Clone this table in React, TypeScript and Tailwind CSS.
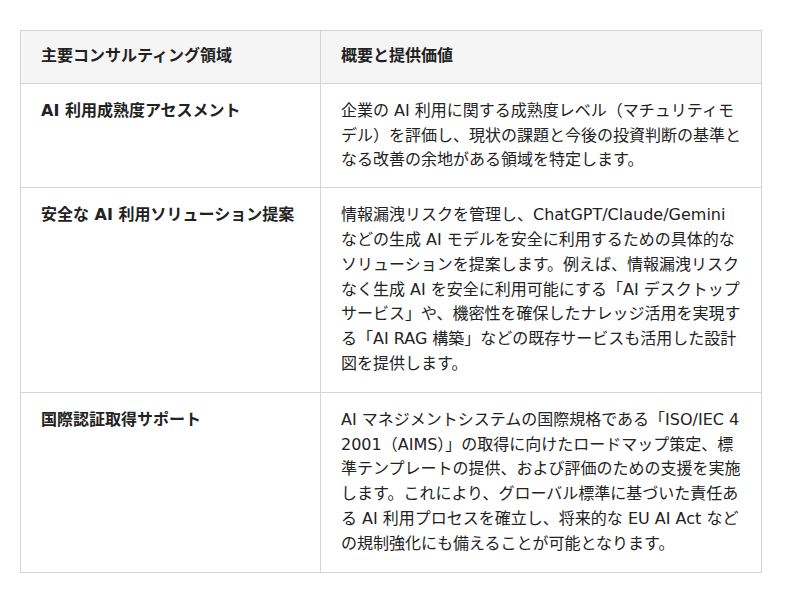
const rows = [
	{
		area: "AI 利用成熟度アセスメント",
		desc: "企業の AI 利用に関する成熟度レベル（マチュリティモデル）を評価し、現状の課題と今後の投資判断の基準となる改善の余地がある領域を特定します。",
		pad: "pt-[15px] pb-[14px]",
	},
	{
		area: "安全な AI 利用ソリューション提案",
		desc: "情報漏洩リスクを管理し、ChatGPT/Claude/Gemini などの生成 AI モデルを安全に利用するための具体的なソリューションを提案します。例えば、情報漏洩リスクなく生成 AI を安全に利用可能にする「AI デスクトップサービス」や、機密性を確保したナレッジ活用を実現する「AI RAG 構築」などの既存サービスも活用した設計図を提供します。",
		pad: "py-[15px]",
	},
	{
		area: "国際認証取得サポート",
		desc: "AI マネジメントシステムの国際規格である「ISO/IEC 42001（AIMS）」の取得に向けたロードマップ策定、標準テンプレートの提供、および評価のための支援を実施します。これにより、グローバル標準に基づいた責任ある AI 利用プロセスを確立し、将来的な EU AI Act などの規制強化にも備えることが可能となります。",
		pad: "py-[15px]",
	},
];

export default function App() {
	return (
		<div className="min-h-screen bg-white pl-5 pt-[30px] font-['DejaVu_Sans','Noto_Sans_CJK_JP',sans-serif] text-[16px] leading-[1.55] text-[#222]">
			<table className="w-[742px] table-fixed border-collapse">
				<colgroup>
					<col className="w-[300px]" />
					<col />
				</colgroup>
				<thead>
					<tr className="bg-[#f5f5f5]">
						<th className="border border-[#d4d4d4] px-5 pt-[13px] pb-[14px] text-left font-bold">主要コンサルティング領域</th>
						<th className="border border-[#d4d4d4] px-5 pt-[13px] pb-[14px] text-left font-bold">概要と提供価値</th>
					</tr>
				</thead>
				<tbody>
					{rows.map((r) => (
						<tr key={r.area}>
							<td className={`border border-[#d4d4d4] px-5 align-top font-bold ${r.pad}`}>{r.area}</td>
							<td className={`break-all border border-[#d4d4d4] px-5 align-top ${r.pad}`}>{r.desc}</td>
						</tr>
					))}
				</tbody>
			</table>
		</div>
	);
}
